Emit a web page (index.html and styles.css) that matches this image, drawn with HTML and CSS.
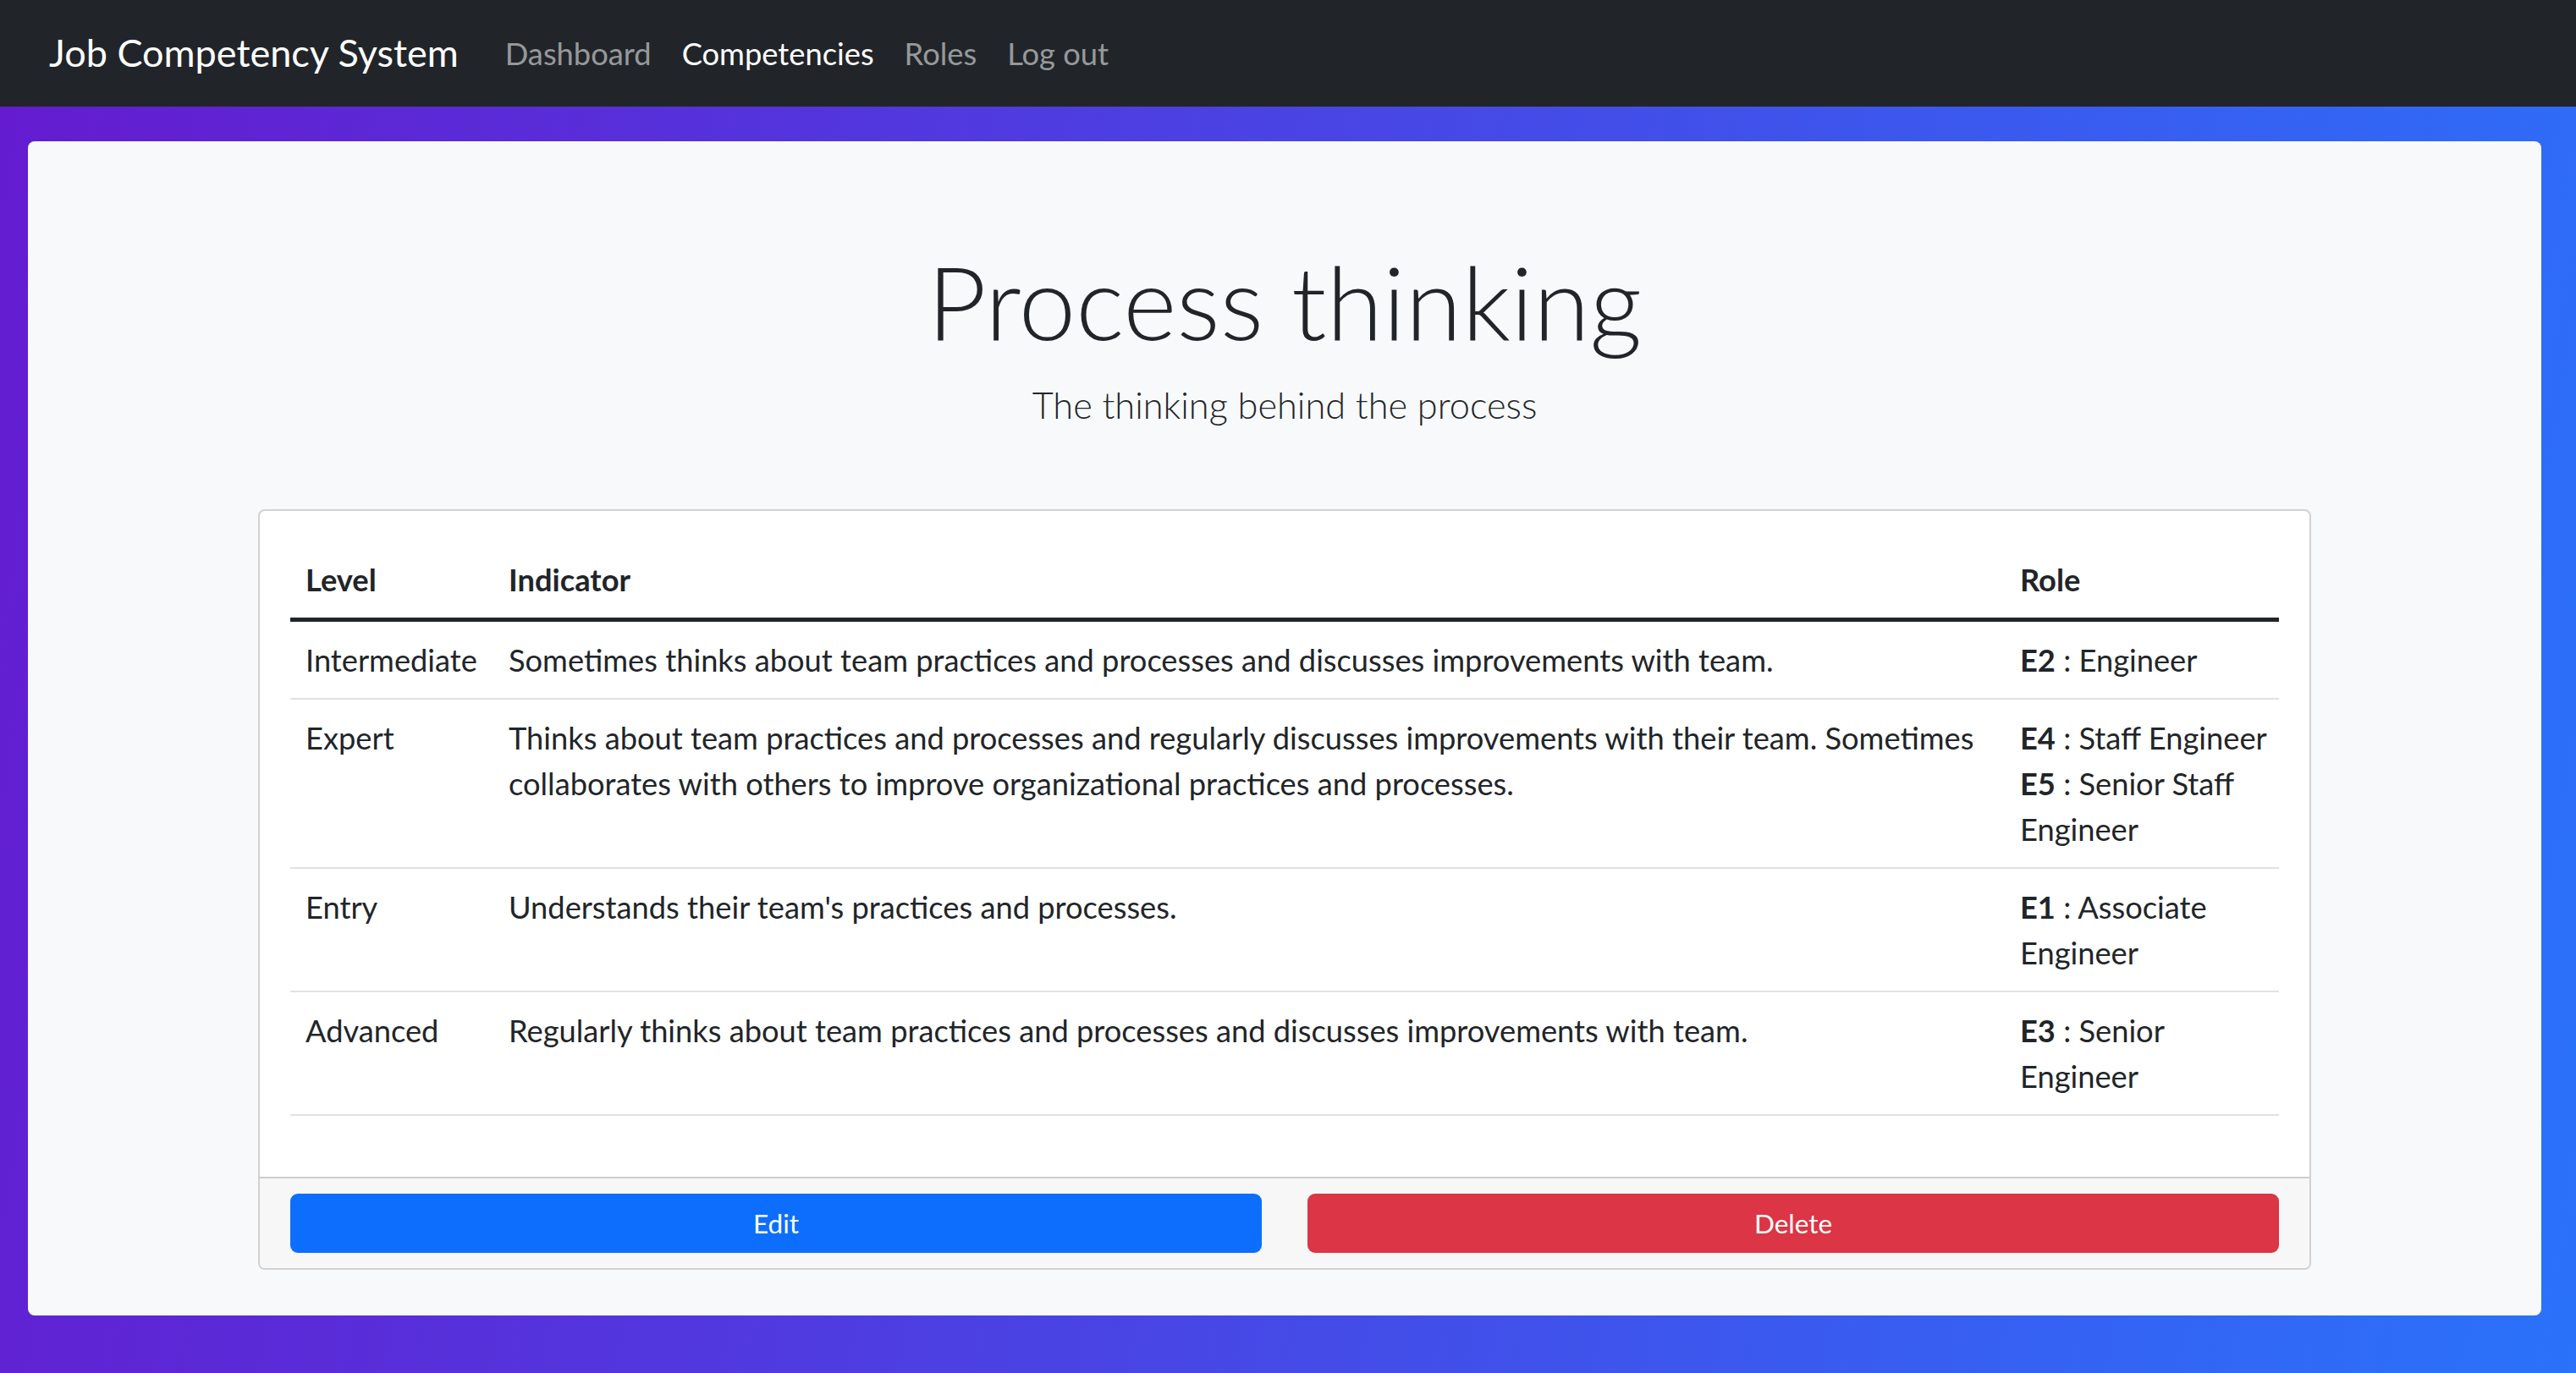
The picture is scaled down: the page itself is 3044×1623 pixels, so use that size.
FILE: index.html
```html
<!DOCTYPE html>
<html lang="en">
<head>
<meta charset="utf-8">
<title>Process thinking - Job Competency System</title>
<link rel="stylesheet" href="styles.css">
</head>
<body>
<nav class="navbar">
  <a class="brand" href="#">Job Competency System</a>
  <ul class="nav">
    <li><a class="nav-link" href="#">Dashboard</a></li>
    <li><a class="nav-link active" href="#">Competencies</a></li>
    <li><a class="nav-link" href="#">Roles</a></li>
    <li><a class="nav-link" href="#">Log out</a></li>
  </ul>
</nav>
<main class="panel">
  <h1 class="title">Process thinking</h1>
  <p class="lead">The thinking behind the process</p>
  <section class="card">
    <div class="card-body">
      <table class="table">
        <colgroup>
          <col class="col-level">
          <col class="col-indicator">
          <col class="col-role">
        </colgroup>
        <thead>
          <tr><th>Level</th><th>Indicator</th><th>Role</th></tr>
        </thead>
        <tbody>
          <tr>
            <td>Intermediate</td>
            <td>Sometimes thinks about team practices and processes and discusses improvements with team.</td>
            <td class="role-cell"><div class="role"><b>E2</b> : Engineer</div></td>
          </tr>
          <tr>
            <td>Expert</td>
            <td>Thinks about team practices and processes and regularly discusses improvements with their team. Sometimes collaborates with others to improve organizational practices and processes.</td>
            <td class="role-cell"><div class="role"><b>E4</b> : Staff Engineer</div><div class="role"><b>E5</b> : Senior Staff Engineer</div></td>
          </tr>
          <tr>
            <td>Entry</td>
            <td>Understands their team's practices and processes.</td>
            <td class="role-cell"><div class="role"><b>E1</b> : Associate Engineer</div></td>
          </tr>
          <tr>
            <td>Advanced</td>
            <td>Regularly thinks about team practices and processes and discusses improvements with team.</td>
            <td class="role-cell"><div class="role"><b>E3</b> : Senior Engineer</div></td>
          </tr>
        </tbody>
      </table>
    </div>
    <div class="card-footer">
      <a class="btn btn-primary" href="#">Edit</a>
      <a class="btn btn-danger" href="#">Delete</a>
    </div>
  </section>
</main>
</body>
</html>
```
FILE: styles.css
```css
* { box-sizing: border-box; }

html, body {
  margin: 0;
  min-height: 100%;
}

body {
  min-height: 1623px;
  font-family: Lato, "Liberation Sans", sans-serif;
  font-size: 36.25px;
  line-height: 54px;
  color: #212529;
  background: linear-gradient(100deg, #651bd0 0%, #2a72fa 100%);
}

/* Navbar */
.navbar {
  display: flex;
  align-items: center;
  height: 126px;
  padding: 0 0 0 58px;
  background: #212529;
}

.brand {
  font-size: 45px;
  line-height: 67.5px;
  color: #fff;
  text-decoration: none;
  margin-right: 37px;
}

.nav {
  display: flex;
  list-style: none;
  margin: 0;
  padding: 0;
}

.nav-link {
  display: block;
  padding: 0 18px;
  font-size: 36.3px;
  line-height: 54px;
  color: rgba(255, 255, 255, 0.55);
  text-decoration: none;
}

.nav-link.active {
  color: #fff;
}

/* Main panel */
.panel {
  margin: 41px 41px 0 33px;
  padding: 113px 272px 54px;
  background: #f8f9fa;
  border-radius: 8px;
}

.title {
  margin: 0 0 14px;
  text-align: center;
  font-size: 121px;
  font-weight: 300;
  line-height: 151px;
}

.lead {
  margin: 0 0 89px;
  text-align: center;
  font-size: 43.3px;
  font-weight: 300;
  line-height: 67.5px;
}

/* Card */
.card {
  background: #fff;
  border: 2px solid rgba(0, 0, 0, 0.175);
  border-radius: 8px;
  overflow: hidden;
}

.card-body {
  padding: 36px 36px;
}

.table {
  width: 100%;
  table-layout: fixed;
  border-collapse: separate;
  border-spacing: 0;
  margin: 0 0 36px;
}

.col-level { width: 240px; }
.col-role { width: 324px; }

.table th,
.table td {
  padding: 18px 18px;
  text-align: left;
  vertical-align: top;
  border-bottom: 2px solid #dee2e6;
}

.table th {
  font-weight: 700;
  border-bottom: 5px solid #212529;
}

.table .role-cell {
  padding-right: 2px;
}

.role b {
  font-weight: 700;
}

.card-footer {
  display: grid;
  grid-template-columns: 1fr 1fr;
  column-gap: 54px;
  padding: 18px 36px;
  background: #f7f7f7;
  border-top: 2px solid rgba(0, 0, 0, 0.175);
}

.btn {
  display: block;
  height: 70px;
  padding: 9px 18px;
  border-radius: 9px;
  font-size: 31.5px;
  line-height: 52px;
  text-align: center;
  color: #fff;
  text-decoration: none;
}

.btn-primary {
  background: #0d6efd;
}

.btn-danger {
  background: #dc3545;
}
```
